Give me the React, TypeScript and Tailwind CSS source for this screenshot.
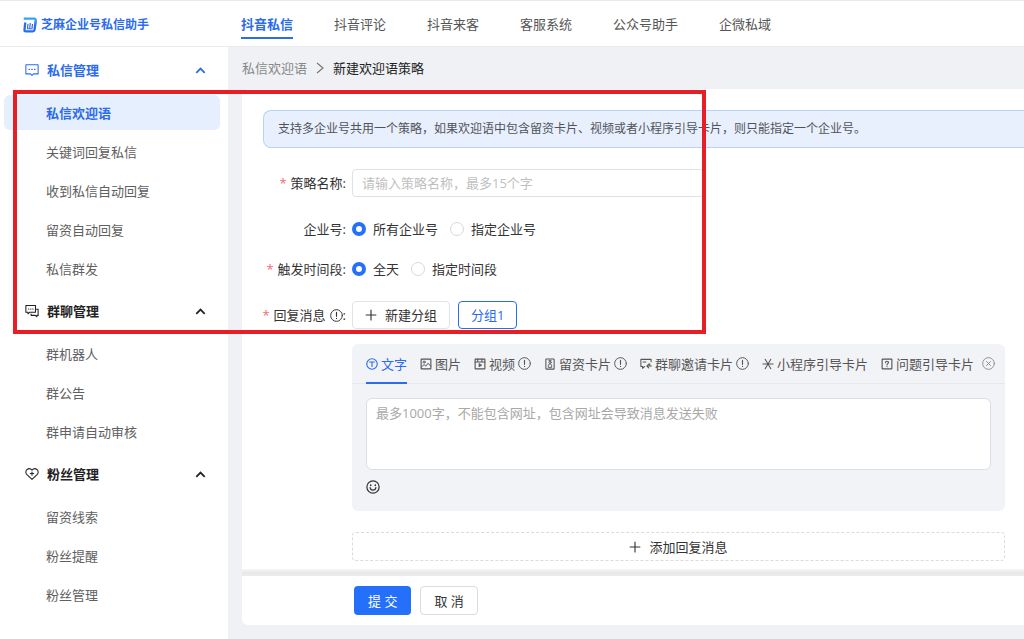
import React, { useState } from "react";

type IconProps = { className?: string };

function Icon({ className = "size-[13px]", children }: { className?: string; children: React.ReactNode }) {
  return (
    <svg
      viewBox="0 0 16 16"
      className={`shrink-0 ${className}`}
      fill="none"
      stroke="currentColor"
      strokeWidth={1.2}
      strokeLinecap="round"
      strokeLinejoin="round"
      aria-hidden="true"
    >
      {children}
    </svg>
  );
}

const ChatIcon = ({ className }: IconProps) => (
  <Icon className={className}>
    <path d="M1 2h14v10.4H9.8L8 14.2l-1.800-1.800H1z" />
    <path d="M4.600 7.200h.6M7.700 7.200h.6M10.800 7.200h.6" strokeWidth={1.400} />
  </Icon>
);

const GroupChatIcon = ({ className }: IconProps) => (
  <Icon className={className}>
    <path d="M1 1.800h11v7.700H5.200L3.400 11.200V9.500H1z" />
    <path d="M4 5.700h.4M6.400 5.700h.4M8.800 5.700h.4" />
    <path d="M13.200 6H15v7h-1.500v1.600L11.700 13H7v-1.600" />
  </Icon>
);

const HeartIcon = ({ className }: IconProps) => (
  <Icon className={className}>
    <path d="M8 14.200 2.200 8.800C.4 7 .6 4.200 2.400 2.900 4.200 1.600 6.700 2 8 3.700c1.300-1.700 3.800-2.100 5.600-.8 1.800 1.300 2 4.100.2 5.900z" />
    <path d="M8 5.600v3.800M6.100 7.500h3.800" />
  </Icon>
);

const ChevronUp = ({ className }: IconProps) => (
  <Icon className={className}>
    <path d="M3.500 10.500 8 6l4.500 4.500" strokeWidth={1.900} strokeLinecap="butt" strokeLinejoin="miter" />
  </Icon>
);

const TextIcon = () => (
  <Icon className="size-3">
    <circle cx="8" cy="8" r="7" strokeWidth={1.500} />
    <path d="M4.800 5.300h6.400M8 5.300v6" strokeWidth={1.500} />
  </Icon>
);

const PictureIcon = () => (
  <Icon className="size-3">
    <rect x="1.500" y="1.500" width="13" height="13" rx=".6" strokeWidth={1.500} />
    <circle cx="5.500" cy="5.400" r="1.400" />
    <path d="m1.800 12 3.600-3.200 2.400 2 3-3.800 3.600 4" strokeWidth={1.300} />
  </Icon>
);

const VideoIcon = () => (
  <Icon className="size-3">
    <rect x="1.500" y="1.500" width="13" height="13" rx=".6" strokeWidth={1.500} />
    <path d="M1.500 5.200h13M5 1.500v3.700M10.500 1.500v3.700" strokeWidth={1.400} />
    <path d="M6.800 7.900v3.800l3-1.900z" fill="currentColor" />
  </Icon>
);

const CardIcon = () => (
  <Icon className="size-3">
    <rect x="2.500" y="1.200" width="11" height="13.600" rx=".6" strokeWidth={1.400} />
    <circle cx="8" cy="5.800" r="1.500" />
    <path d="M5.800 12V9.600c0-.9.800-1.400 2.200-1.400s2.200.5 2.200 1.400V12zM6.500 3.200h3" />
  </Icon>
);

const InviteIcon = () => (
  <Icon className="size-3">
    <path d="M14.800 5V1.800H1.200v9.500h2.300v2.500l2.800-2.500" strokeWidth={1.400} />
    <path d="M4.200 5.200h3.600M9.300 10.700h5.900M11.600 8.200l-2.400 2.500 2.400 2.500M13 7.800v1.600" strokeWidth={1.400} />
  </Icon>
);

const AsteriskIcon = () => (
  <Icon className="size-3">
    <path d="M1.200 8h13.600M4.200 1.800l7.600 12.400M11.800 1.800 4.200 14.200" strokeWidth={1.400} />
  </Icon>
);

const QuestionIcon = () => (
  <Icon className="size-3">
    <rect x="1.500" y="1.500" width="13" height="13" rx=".6" strokeWidth={1.500} />
    <path d="M6 6.200c0-1.200.8-1.900 2-1.900s2 .7 2 1.800c0 1.400-2 1.500-2 3.100M8 11.500v.2" strokeWidth={1.500} />
  </Icon>
);

const InfoIcon = () => (
  <Icon>
    <circle cx="8" cy="8" r="7.200" strokeWidth={1.200} />
    <path d="M8 4.200v4.800M8 11.500v.2" strokeWidth={1.400} />
  </Icon>
);

const CloseIcon = () => (
  <Icon>
    <circle cx="8" cy="8" r="7.200" strokeWidth={1.100} />
    <path d="m5.600 5.600 4.800 4.800M10.400 5.600l-4.800 4.800" />
  </Icon>
);

const SmileIcon = () => (
  <Icon className="size-[14px]">
    <circle cx="8" cy="8" r="7" strokeWidth={1.400} />
    <path d="M5.400 5.700v.5M10.600 5.700v.5" strokeWidth={1.700} />
    <path d="M4.700 8.800c.3 1.800 1.600 2.800 3.300 2.800s3-1 3.300-2.800" strokeWidth={1.400} />
  </Icon>
);

const PlusIcon = () => (
  <Icon className="size-3">
    <path d="M8 1.500v13M1.500 8h13" strokeWidth={1.500} />
  </Icon>
);

const Logo = () => (
  <svg viewBox="0 0 28 32" className="h-4 w-[14px] shrink-0" fill="none" aria-hidden="true">
    <path d="M4.500 11 3 26c-.2 1.800.6 2.700 2.200 2.700h14.300c2 0 3.200-1 3.500-3L25.500 8" stroke="#2b6bec" strokeWidth="4.600" strokeLinejoin="round" />
    <path d="M1.500 3.300h20.700c2.600 0 3.600 1.400 3.200 3.800L25 11" stroke="#33a4f5" strokeWidth="4.600" />
    <path d="M10 14 9 23M14.600 12l-1.200 11M19 14l-1 9" stroke="#2b6bec" strokeWidth="2.400" />
    <path d="M8 23.500h11" stroke="#2b6bec" strokeWidth="2" />
  </svg>
);

const navItems = ["抖音私信", "抖音评论", "抖音来客", "客服系统", "公众号助手", "企微私域"];

const menu = [
  { title: "私信管理", icon: ChatIcon, active: true, items: ["私信欢迎语", "关键词回复私信", "收到私信自动回复", "留资自动回复", "私信群发"] },
  { title: "群聊管理", icon: GroupChatIcon, active: false, items: ["群机器人", "群公告", "群申请自动审核"] },
  { title: "粉丝管理", icon: HeartIcon, active: false, items: ["留资线索", "粉丝提醒", "粉丝管理"] },
];

const tabs = [
  { label: "文字", icon: TextIcon, info: false },
  { label: "图片", icon: PictureIcon, info: false },
  { label: "视频", icon: VideoIcon, info: true },
  { label: "留资卡片", icon: CardIcon, info: true },
  { label: "群聊邀请卡片", icon: InviteIcon, info: true },
  { label: "小程序引导卡片", icon: AsteriskIcon, info: false },
  { label: "问题引导卡片", icon: QuestionIcon, info: false },
];

function Header() {
  return (
    <header className="flex h-[47px] border-y border-[#e9eaed] bg-white">
      <div className="flex w-[228px] shrink-0 items-center gap-1 pt-0.5 pl-[23px] text-xs font-bold text-[#2b6bec]">
        <Logo />
        <span>芝麻企业号私信助手</span>
      </div>
      <nav className="flex items-center gap-[41px] pl-[13px]">
        {navItems.map((item, i) => (
          <a
            key={item}
            href="#"
            className={
              i === 0
                ? "border-b-2 border-[#2b6bec] pt-[5px] pb-[3px] font-bold text-[#2b6bec]"
                : "border-b-2 border-transparent pt-[5px] pb-[3px] text-[#555]"
            }
          >
            {item}
          </a>
        ))}
      </nav>
    </header>
  );
}

function Sidebar() {
  return (
    <aside className="w-[228px] shrink-0 bg-white">
      {menu.map(({ title, icon: MenuIcon, active, items }) => (
        <section key={title}>
          <button
            type="button"
            aria-expanded="true"
            className={`flex h-[46px] w-full items-center pr-5 pl-[25px] font-bold ${active ? "text-[#2b6bec]" : "text-[#222]"}`}
          >
            <MenuIcon className="size-[14px]" />
            <span className="ml-2 flex-1 text-left">{title}</span>
            <ChevronUp className="size-[15px]" />
          </button>
          <ul>
            {items.map((item, i) => (
              <li key={item} className="flex h-[39px] items-center pr-2 pl-1">
                <a
                  href="#"
                  className={`flex h-[35px] flex-1 items-center rounded-md pl-[42px] ${
                    active && i === 0 ? "bg-[#e6effd] font-bold text-[#2b6bec]" : "text-[#606060]"
                  }`}
                >
                  {item}
                </a>
              </li>
            ))}
          </ul>
        </section>
      ))}
    </aside>
  );
}

const Star = () => <span className="mr-1 text-[#f56c6c]">*</span>;

function RadioRow({ id, label, required, options }: { id: string; label: string; required?: boolean; options: string[] }) {
  const [value, setValue] = useState(options[0]);
  return (
    <div className="flex h-7 items-center" role="radiogroup" aria-labelledby={id}>
      <span id={id} className="mr-1.5 flex w-[83px] shrink-0 justify-end whitespace-nowrap">
        {required && <Star />}
        {label}:
      </span>
      <div className="flex gap-3">
        {options.map((option) => (
          <label key={option} className="flex items-center gap-[7px]">
            <input
              type="radio"
              name={id}
              checked={value === option}
              onChange={() => setValue(option)}
              className="size-[14px] appearance-none rounded-full border border-[#d9d9d9] bg-white checked:border-4 checked:border-[#2470fb]"
            />
            {option}
          </label>
        ))}
      </div>
    </div>
  );
}

function MessagePanel() {
  return (
    <div className="rounded-md bg-[#f2f3f7] pb-[17px]">
      <div className="flex h-10 items-center border-b border-[#e6e8ec] pr-2.5 pl-3.5 text-[#555]">
        <div role="tablist" className="flex h-10 flex-1 gap-[13px]">
          {tabs.map(({ label, icon: TabIcon, info }, i) => (
            <button
              key={label}
              type="button"
              role="tab"
              aria-selected={i === 0}
              className={`flex h-10 items-center border-b-2 pt-0.5 whitespace-nowrap ${
                i === 0 ? "border-[#2b6bec] text-[#2b6bec]" : "border-transparent"
              }`}
            >
              <TabIcon />
              <span className="mx-[3px] last:mr-0">{label}</span>
              {info && <InfoIcon />}
            </button>
          ))}
        </div>
        <button type="button" aria-label="关闭" className="text-[#888]">
          <CloseIcon />
        </button>
      </div>
      <div className="px-3.5 pt-3.5">
        <textarea
          aria-label="文字"
          placeholder="最多1000字，不能包含网址，包含网址会导致消息发送失败"
          className="block h-[72px] w-full resize-none rounded-md border border-[#dcdee3] bg-white px-[9px] py-1 placeholder:text-[#a8a8a8]"
        />
        <button type="button" aria-label="表情" className="mt-2.5 block text-[#333]">
          <SmileIcon />
        </button>
      </div>
    </div>
  );
}

export default function App() {
  return (
    <div className="relative min-h-screen overflow-x-hidden bg-[#eff1f5] font-['Open_Sans','Noto_Sans_CJK_SC',sans-serif] text-[13px] leading-5 text-[#333]">
      <Header />
      <div className="flex min-h-[calc(100vh-47px)]">
        <Sidebar />
        <main className="min-w-0 flex-1 pb-3.5 pl-3.5">
          <nav className="flex h-[42px] items-center gap-2 text-[#888]">
            <a href="#">私信欢迎语</a>
            <svg viewBox="0 0 10 12" className="h-3 w-2.5" fill="none" stroke="#777" strokeWidth="1.2" aria-hidden="true">
              <path d="m2 1 6 5-6 5" />
            </svg>
            <span className="text-[#222]">新建欢迎语策略</span>
          </nav>

          <form className="rounded-l-md bg-white" onSubmit={(e) => e.preventDefault()}>
            <div className="pt-[21px] pb-2 pl-[21px]">
              <div className="flex h-[38px] items-center rounded-l-lg border border-r-0 border-[#b7d3f3] bg-[#e8f0fd] pl-3.5 text-xs whitespace-nowrap text-[#50535a]">
                支持多企业号共用一个策略，如果欢迎语中包含留资卡片、视频或者小程序引导卡片，则只能指定一个企业号。
              </div>

              <div className="pt-[21px] pr-[19px]">
                <div className="mb-[18px] flex items-center">
                  <label htmlFor="name" className="mr-1.5 flex w-[83px] shrink-0 justify-end whitespace-nowrap">
                    <Star />
                    策略名称:
                  </label>
                  <input
                    id="name"
                    placeholder="请输入策略名称，最多15个字"
                    className="h-7 w-full max-w-[352px] rounded border border-[#dfe1e5] bg-white px-[9px] placeholder:text-[#bfbfbf]"
                  />
                </div>
                <div className="mb-3">
                  <RadioRow id="account" label="企业号" options={["所有企业号", "指定企业号"]} />
                </div>
                <div className="mb-[18px]">
                  <RadioRow id="period" label="触发时间段" required options={["全天", "指定时间段"]} />
                </div>
                <div className="flex h-7 items-center">
                  <span className="mr-1.5 flex w-[83px] shrink-0 items-center justify-end whitespace-nowrap">
                    <Star />
                    回复消息
                    <span className="ml-1 flex items-center">
                      <InfoIcon />:
                    </span>
                  </span>
                  <div className="flex gap-2">
                    <button type="button" className="flex h-7 items-center gap-2 rounded border border-[#e2e3e6] bg-white px-3">
                      <PlusIcon />
                      新建分组
                    </button>
                    <button type="button" className="h-7 rounded border border-[#2b6bec] bg-white px-3 text-[#2b6bec]">
                      分组1
                    </button>
                  </div>
                </div>
                <div className="pt-[15px] pl-[89px]">
                  <MessagePanel />
                  <button
                    type="button"
                    className="mt-[21px] flex h-[29px] w-full items-center justify-center gap-2 rounded border border-dashed border-[#dcdcdc] bg-white"
                  >
                    <PlusIcon />
                    添加回复消息
                  </button>
                </div>
              </div>
            </div>

            <div className="h-[7px] bg-linear-to-b from-[#f6f6f6] via-[#e9e9e9] to-[#ececec]" />
            <div className="flex gap-[9px] py-2.5 pl-28">
              <button type="submit" className="h-[29px] rounded bg-[#2470fb] px-3.5 text-white">
                提 交
              </button>
              <button type="button" className="h-[29px] rounded border border-[#dcdcdc] bg-white px-[13px]">
                取 消
              </button>
            </div>
          </form>
        </main>
      </div>

      <div className="pointer-events-none absolute top-[90px] left-[13px] h-[244px] w-[693px] border-4 border-[#e61f26]" />
    </div>
  );
}
